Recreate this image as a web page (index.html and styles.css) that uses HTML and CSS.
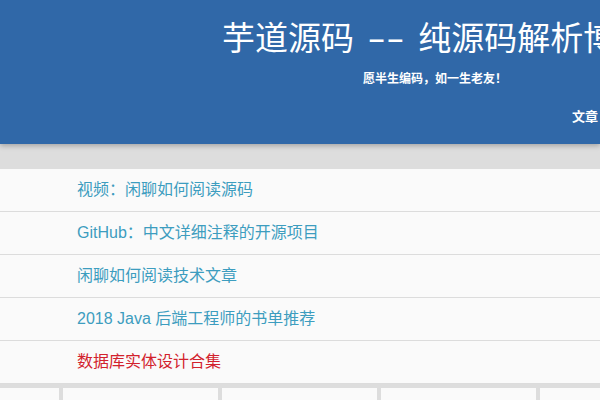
FILE: index.html
```html
<!DOCTYPE html>
<html lang="zh-CN">
<head>
  <meta charset="UTF-8" />
  <title>芋道源码 -- 纯源码解析博客</title>
  <link rel="stylesheet" href="styles.css">
</head>
<body>

  <header class="site-header">
    <h1 class="site-title">芋道源码 <span class="sep">--</span> 纯源码解析博客</h1>
    <p class="site-desc">愿半生编码，如一生老友！</p>
    <nav class="site-nav">
      <a href="#">文章</a>
      <a href="#">归档</a>
      <a href="#">关于</a>
    </nav>
  </header>

  <div class="band"></div>

  <ul class="top-list">
    <li><a href="#">视频：闲聊如何阅读源码</a></li>
    <li><a href="#">GitHub：中文详细注释的开源项目</a></li>
    <li><a href="#">闲聊如何阅读技术文章</a></li>
    <li><a href="#">2018 Java 后端工程师的书单推荐</a></li>
    <li><a href="#" class="hot">数据库实体设计合集</a></li>
  </ul>

  <div class="cards">
    <div class="card"></div>
    <div class="card"></div>
    <div class="card"></div>
    <div class="card"></div>
    <div class="card"></div>
  </div>

</body>
</html>
```

FILE: styles.css
```css
html, body {
  margin: 0;
  padding: 0;
  background: #dddddd;
  overflow: hidden;
}
body {
  font-family: "Liberation Sans", "Noto Sans CJK SC", sans-serif;
}
a {
  text-decoration: none;
}

/* header */
.site-header {
  height: 144px;
  background: #3068a8;
  color: white;
  white-space: nowrap;
  overflow: hidden;
  position: relative;
  box-shadow: 0 2px 5px rgba(0, 0, 0, 0.25);
}
.site-title {
  margin: 0;
  padding: 19px 0 0 222px;
  font-size: 33px;
  line-height: 40px;
  font-weight: normal;
}
.site-title .sep {
  display: inline-block;
  margin: 0 12px;
  transform: scaleX(1.7);
}
.site-desc {
  margin: 12px 0 0 363px;
  font-size: 12px;
  line-height: 16px;
  font-weight: bold;
}
.site-nav {
  margin: 19px 0 0 572px;
}
.site-nav a {
  color: white;
  font-size: 13px;
  font-weight: bold;
  margin-right: 20px;
}

.band {
  height: 25px;
  background: #dddddd;
}

/* top links */
.top-list {
  list-style: none;
  margin: 0;
  padding: 0;
  background: #fafafa;
}
.top-list li {
  height: 42px;
  line-height: 42px;
  padding-left: 77px;
  border-bottom: 1px solid #dcdcdc;
  font-size: 16px;
}
.top-list a {
  color: #3d9dbf;
}
.top-list a.hot {
  color: #d2222d;
}

/* bottom cards */
.cards {
  display: flex;
  gap: 4px;
  margin: 4px 0 0 -96px;
}
.card {
  flex: 0 0 155px;
  height: 40px;
  background: #fafafa;
}
```
